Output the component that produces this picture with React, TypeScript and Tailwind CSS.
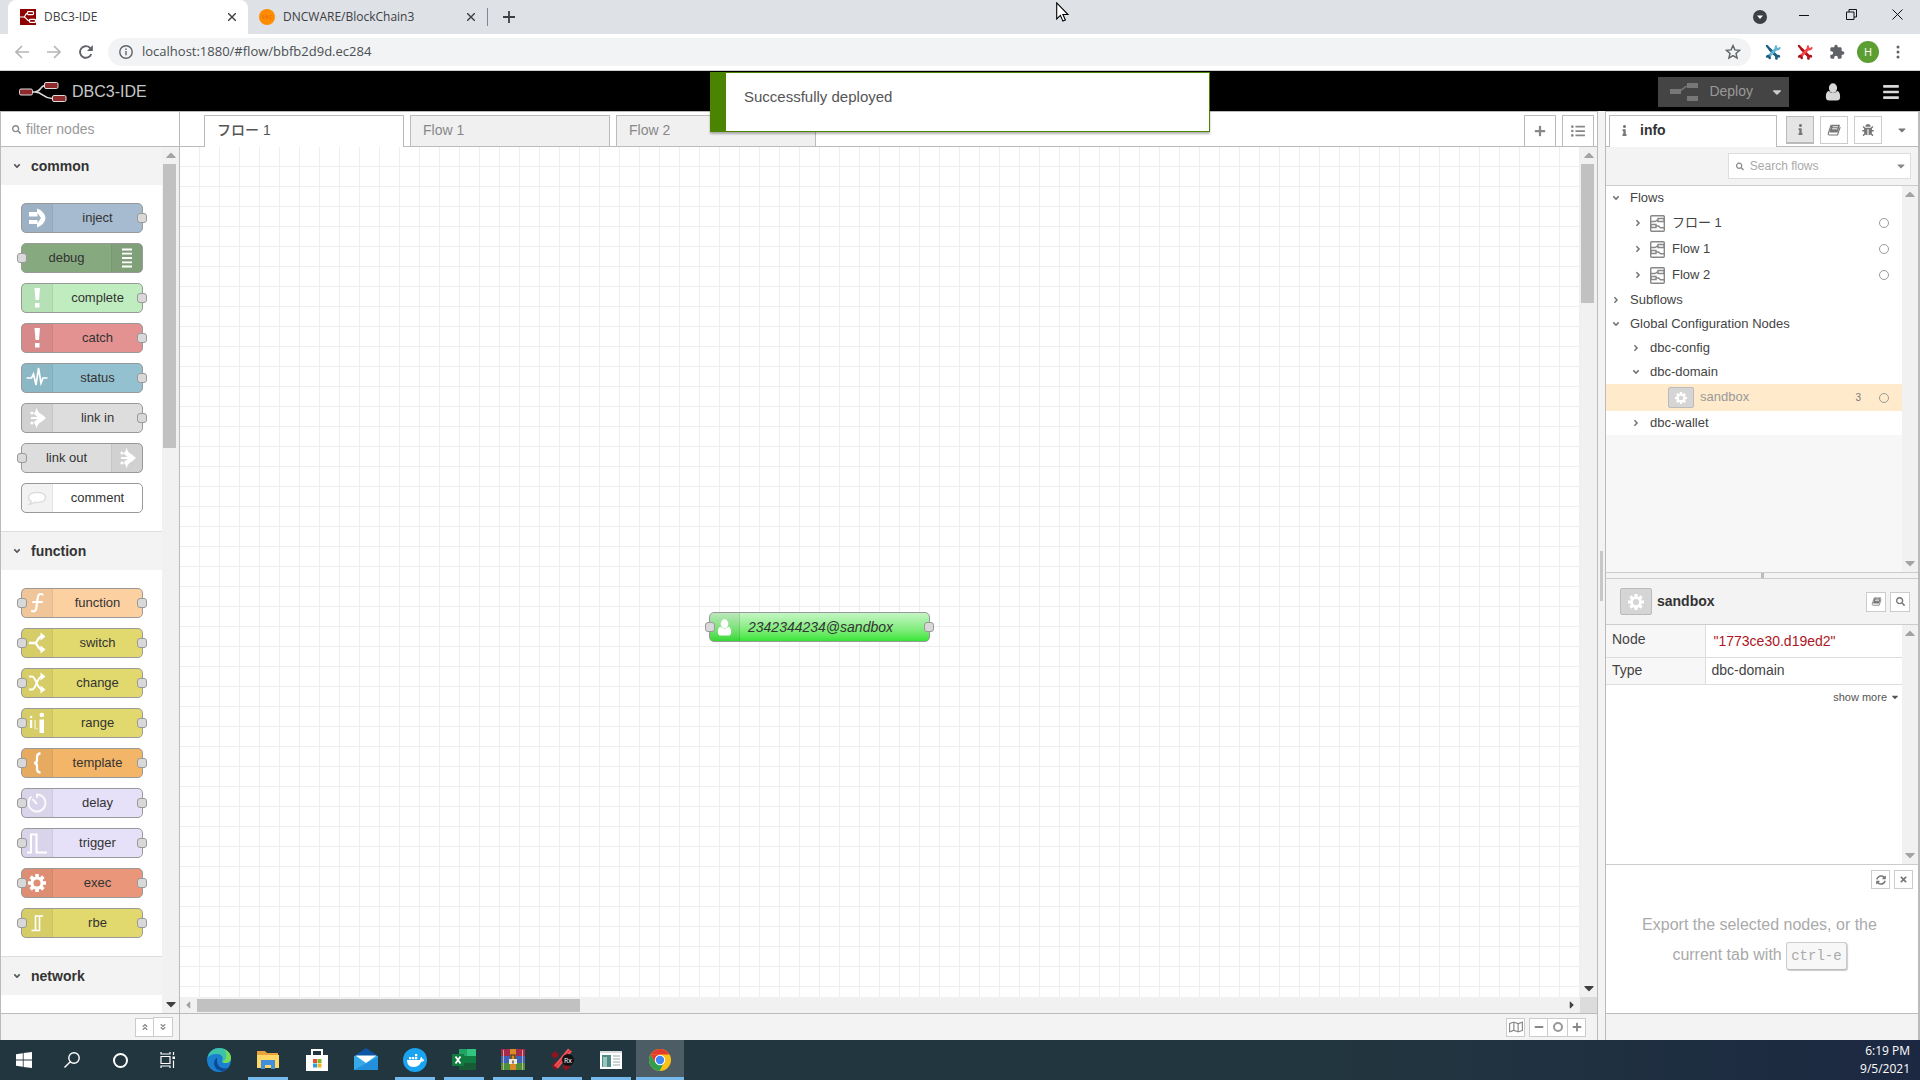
import React from "react";
import {
  FaSearch,
  FaPlus,
  FaMinus,
  FaListUl,
  FaInfo,
  FaBug,
  FaCaretDown,
  FaCaretUp,
  FaCaretLeft,
  FaCaretRight,
  FaTimes,
  FaSyncAlt,
  FaAngleDown,
  FaAngleRight,
  FaAngleDoubleUp,
  FaAngleDoubleDown,
  FaRegMap,
  FaBars,
} from "react-icons/fa";
import { MdExtension } from "react-icons/md";

const ui = "font-['Open_Sans','Noto_Sans_CJK_JP',sans-serif]";

/* ---------- shared pieces ---------- */

function Bust({ className }: { className: string }) {
  return (
    <svg viewBox="0 0 18 20" className={className} fill="currentColor" aria-hidden="true">
      <ellipse cx="9" cy="5.6" rx="4.6" ry="5.4" />
      <path d="M4.4 9C1.4 9.6 1 13 1 15.6 1 18.4 2.4 19.6 4.6 19.6h8.8c2.2 0 3.6-1.2 3.6-4 0-2.6-.4-6-3.4-6.6-1.2 1.4-2.8 2.2-4.6 2.2S5.6 10.400 4.400 9z" />
    </svg>
  );
}

function Cog({ className }: { className: string }) {
  return (
    <svg viewBox="0 0 20 20" className={className} aria-hidden="true">
      <circle cx="10" cy="10" r="5.600" fill="none" stroke="currentColor" strokeWidth="3.400" />
      <path
        d="M10 0v4M10 16v4M0 10h4M16 10h4M2.930 2.930l2.830 2.830M14.240 14.240l2.830 2.830M2.930 17.070l2.830-2.830M14.240 5.760l2.830-2.830"
        stroke="currentColor"
        strokeWidth="4"
      />
    </svg>
  );
}

function Book({ className }: { className: string }) {
  return (
    <svg viewBox="0 0 16 14" className={className} aria-hidden="true">
      <path d="M5 .8h10L12.200 10H2.600z" fill="currentColor" />
      <path d="M6.500 3.200h6M5.800 5.600h6" stroke="#fff" strokeWidth="1.100" />
      <path d="M4.600 1L1.400 10.600c-.4 1.400.2 2.200 1.400 2.200h9.400l3-9.300" fill="none" stroke="currentColor" strokeWidth="1.300" />
    </svg>
  );
}

function VBar({ width, thumb, dim }: { width: string; thumb?: string; dim?: boolean }) {
  return (
    <div className={`flex shrink-0 flex-col items-center bg-[#f1f1f1] ${width}`}>
      <FaCaretUp className="h-4 w-3 shrink-0 text-[#a3a3a3]" />
      <div className="min-h-0 w-full flex-1 px-px pt-px">{thumb && <div className={`w-[13px] bg-[#c1c1c1] ${thumb}`} />}</div>
      <FaCaretDown className={dim ? "mb-px h-4 w-3 shrink-0 text-[#a3a3a3]" : "mb-px h-4 w-3 shrink-0 text-[#404040]"} />
    </div>
  );
}

/* ---------- browser chrome ---------- */

function NodeRedFavicon() {
  return (
    <svg viewBox="0 0 16 16" className="size-4" aria-hidden="true">
      <rect width="16" height="16" fill="#8f0000" />
      <g fill="none" stroke="#fff" strokeWidth="1.200">
        <rect x="7.500" y="2.600" width="6" height="3" rx="0.800" />
        <rect x="9.500" y="10.400" width="6" height="3" rx="0.800" />
        <path d="M0 8h3.500c2.500 0 1.500-3.900 4-3.900M3.500 8c3 0 3 3.900 6 3.900" />
      </g>
    </svg>
  );
}

function TabStrip() {
  return (
    <div className={`flex h-[34px] items-stretch bg-[#dee1e6] text-[12px] text-[#3c4043] ${ui}`}>
      <div className="ml-2 flex w-60 items-center rounded-t-lg bg-white pr-2 pl-3">
        <NodeRedFavicon />
        <span className="ml-2 flex-1">DBC3-IDE</span>
        <button aria-label="Close DBC3-IDE" className="p-1">
          <svg viewBox="0 0 8 8" className="size-2" stroke="#3c4043" strokeWidth="1.400"><path d="M0 0l8 8M8 0L0 8" /></svg>
        </button>
      </div>
      <div className="flex w-[239px] items-center pr-2 pl-[11px]">
        <svg viewBox="0 0 16 16" className="size-4" aria-hidden="true">
          <circle cx="8" cy="8" r="8" fill="#ff8c00" />
          <path d="M3.500 6.500v3h1l.8-1.500-.8-1.500zM7 9.500v-3l1.800 3v-3M12.500 6.500h-1.500v3h1.500" fill="none" stroke="#e06d00" strokeWidth=".7" />
        </svg>
        <span className="ml-2 flex-1">DNCWARE/BlockChain3</span>
        <button aria-label="Close DNCWARE" className="p-1">
          <svg viewBox="0 0 8 8" className="size-2" stroke="#3c4043" strokeWidth="1.400"><path d="M0 0l8 8M8 0L0 8" /></svg>
        </button>
      </div>
      <div className="my-2 w-px bg-[#80868b]" />
      <button aria-label="New tab" className="ml-[15px] flex items-center">
        <svg viewBox="0 0 12 12" className="size-3" stroke="#3c4043" strokeWidth="1.800"><path d="M6 0v12M0 6h12" /></svg>
      </button>
      <div className="flex-1" />
      <button aria-label="Search tabs" className="flex w-10 items-center justify-center">
        <svg viewBox="0 0 14 14" className="size-3.5"><circle cx="7" cy="7" r="7" fill="#3c4043" /><path d="M4 5.500h6L7 9z" fill="#fff" /></svg>
      </button>
      <button aria-label="Minimise" className="flex w-12 items-center justify-center">
        <svg viewBox="0 0 10 10" className="mb-1 size-2.5" stroke="#111"><path d="M0 5.500h10" /></svg>
      </button>
      <button aria-label="Restore" className="flex w-[46px] items-center justify-center">
        <svg viewBox="0 0 11 11" className="mb-1.5 size-[11px]" fill="none" stroke="#111"><path d="M.5 3h7.500v7.500H.5zM3 3V.5h7.500V8H8" /></svg>
      </button>
      <button aria-label="Close window" className="flex w-[46px] items-center justify-center">
        <svg viewBox="0 0 11 11" className="mb-1.5 size-[11px]" stroke="#111"><path d="M.5.5l10 10M10.500.5l-10 10" /></svg>
      </button>
    </div>
  );
}

function Wrenches({ dark, light }: { dark: string; light: string }) {
  return (
    <svg viewBox="0 0 16 16" className="size-4" fill="none" strokeLinecap="round" aria-hidden="true">
      <path d="M5 5.500l6 6" stroke={dark} strokeWidth="3" />
      <path d="M11.500 4.500L4 12" stroke={light} strokeWidth="3" />
      <path d="M2 2l3 3.500" stroke={dark} strokeWidth="2.400" />
      <path d="M11 2.200c-.8 1.800 0 3.200 1.400 3.200 1 0 1.800-.6 2.200-1.400" stroke={light} strokeWidth="2" />
      <path d="M2.200 12.500c1-.8 2.500 0 2.500 1.500M11.500 14.500c-.6-1.400.6-2.800 2.400-2.200" stroke={dark} strokeWidth="2.600" />
    </svg>
  );
}

function AddressBar() {
  return (
    <div className={`flex h-[37px] items-center border-b border-[#d0d0d0] bg-white text-[13px] text-[#5f6368] ${ui}`}>
      <div className="flex w-[108px] items-center gap-[18px] pl-[15px]">
        <button aria-label="Back">
          <svg viewBox="0 0 14 14" className="size-3.5" fill="none" stroke="#b4b6b9" strokeWidth="1.600"><path d="M14 7H1M7 1L1 7l6 6" /></svg>
        </button>
        <button aria-label="Forward">
          <svg viewBox="0 0 14 14" className="size-3.5" fill="none" stroke="#b4b6b9" strokeWidth="1.600"><path d="M0 7h13M7 1l6 6-6 6" /></svg>
        </button>
        <button aria-label="Reload">
          <svg viewBox="0 0 14 14" className="size-3.5" fill="none" stroke="#5f6368" strokeWidth="1.900"><path d="M12.300 9A5.800 5.800 0 1 1 11 2.900l1.500 1.600" /><path d="M13.800 0v6H8z" fill="#5f6368" stroke="none" /></svg>
        </button>
      </div>
      <div className="flex h-7 flex-1 items-center rounded-full bg-[#f1f3f4] pr-2.5 pl-[11px]">
        <svg viewBox="0 0 14 14" className="size-3.5 shrink-0" fill="none" stroke="#5f6368" strokeWidth="1.400"><circle cx="7" cy="7" r="6.200" /><path d="M7 6v4.200M7 3.500v1.500" /></svg>
        <input aria-label="Address" readOnly className="ml-[9px] w-full bg-transparent text-[#4b4f53] outline-none" defaultValue="localhost:1880/#flow/bbfb2d9d.ec284" />
        <button aria-label="Bookmark">
          <svg viewBox="0 0 16 16" className="size-4" fill="none" stroke="#5f6368" strokeWidth="1.400"><path d="M8 1.500l1.900 4.400 4.700.4-3.600 3.100 1.100 4.700L8 11.600l-4.100 2.500L5 9.400 1.400 6.300l4.700-.4z" /></svg>
        </button>
      </div>
      <div className="flex items-center gap-4 pr-[15px] pl-[14px]">
        <button aria-label="Blue tools"><Wrenches dark="#1f5f80" light="#5fb4cf" /></button>
        <button aria-label="Red tools"><Wrenches dark="#b01318" light="#f2454a" /></button>
        <button aria-label="Extensions"><MdExtension className="size-4 text-[#5f6368]" /></button>
        <button aria-label="Profile" className="-mx-1 flex size-[22px] items-center justify-center rounded-full bg-[#5c9e31] text-[11px] text-white">H</button>
        <button aria-label="Menu">
          <svg viewBox="0 0 14 14" className="size-3.5" fill="#5f6368"><circle cx="7" cy="2" r="1.500" /><circle cx="7" cy="7" r="1.500" /><circle cx="7" cy="12" r="1.500" /></svg>
        </button>
      </div>
    </div>
  );
}

/* ---------- editor header ---------- */

function EditorHeader() {
  return (
    <header className="flex h-10 items-center bg-black pt-px text-[#c7c7c7]">
      <svg viewBox="0 0 48 22" className="ml-[19px] h-[22px] w-12" aria-hidden="true">
        <path d="M13 11h3c6 0 5-6.500 10-6.500M16 11c8 0 8 6.500 17 6.500" fill="none" stroke="#ddd" strokeWidth="1.500" />
        <g fill="#8f2a2c" stroke="#ddd">
          <rect x=".5" y="8" width="13" height="6" rx="1.500" />
          <rect x="25.500" y="1.500" width="13.500" height="6" rx="1.500" />
          <rect x="33.500" y="14.500" width="13.500" height="6" rx="1.500" />
        </g>
      </svg>
      <span className="ml-[5px] flex-1 text-[16px]">DBC3-IDE</span>
      <div className="flex h-[30px] items-center bg-[#444] text-[14px] text-[#999]">
        <button className="flex h-full items-center px-3">
          <svg viewBox="0 0 28 20" className="mr-[11px] h-5 w-7" aria-hidden="true">
            <path d="M8 9c6 0 5-5 10-5" fill="none" stroke="#777" strokeWidth="1.500" />
            <g fill="#777"><rect y="7" width="11" height="5" /><rect x="17" y="1" width="11" height="5" /><rect x="17" y="14" width="11" height="5" /></g>
          </svg>
          Deploy
        </button>
        <button aria-label="Deploy options" className="flex h-full w-6 items-center justify-center text-[#ccc]">
          <FaCaretDown className="size-3.5" />
        </button>
      </div>
      <button aria-label="User" className="ml-9 text-[#d8d8d8]"><Bust className="h-[18px] w-4" /></button>
      <button aria-label="Main menu" className="mr-5 ml-[41px] text-[#d8d8d8]"><FaBars className="size-[18px]" /></button>
    </header>
  );
}

/* ---------- palette ---------- */

const glyphs: Record<string, React.ReactNode> = {
  inject: <path d="M4 6h8V2.500c4.500 1.500 8 5 8.500 9.500-.5 4.500-4 8-8.500 9.500V18H4v-4h8.500v3l3.500-5-3.500-5v3.500H4z" fill="#fff" />,
  debug: <path d="M7 3.500h10M7 7.700h10M7 12h10M7 16.300h10M7 20.500h10" stroke="#fff" strokeWidth="1.800" />,
  bang: <path d="M9.500 2h5.500l-1 12h-3.500zM10 17h4.500v4.500H10z" fill="#fff" />,
  status: <path d="M1.500 12h5l2-4 2.500 11L13.500 2l2.500 15 2-5h4.500" fill="none" stroke="#fff" strokeWidth="1.700" />,
  link: <g fill="#fff"><path d="M11.500 1.500c1 4 3 6 5.500 7l4 3.500-4 3.500c-2.500 1-4.500 3-5.500 7-.5-2.500-1-4.500-3-6l4-3.500H6v-2h6.500l-4-3.500c2-1.500 2.500-3.500 3-6z" /><circle cx="7" cy="7" r="1.600" /><circle cx="7" cy="17" r="1.600" /></g>,
  comment: <path d="M12 6.500c5 0 8.500 2 8.500 5s-3.500 5-8.500 5c-1 0-1.500 0-2.500-.2-1.500 1.500-3 2-5 2 1-.7 1.800-1.700 1.800-3-2-1-2.800-2.300-2.800-3.800 0-3 3.500-5 8.500-5z" fill="#fff" stroke="#ddd" strokeWidth="1.500" />,
  function: <path d="M17.500 3.500c-3.500-1.500-4.500.5-5 4.500l-1 8c-.5 4-2 5-4.500 4M8 11h9" fill="none" stroke="#fff" strokeWidth="2.200" strokeLinecap="round" />,
  switch: <g fill="none" stroke="#fff" strokeWidth="2.300"><path d="M4 12h6c2.500 0 2.500-6.500 7-6.500M10 12c2.500 0 2.500 6.500 7 6.500" /><path d="M15.500 1.500l5 4-5 4zM15.500 14.500l5 4-5 4z" fill="#fff" stroke="none" /></g>,
  change: <g fill="none" stroke="#fff" strokeWidth="2"><path d="M4 5.500h3c4 0 5 13 10 13M4 18.500h3c4 0 5-13 10-13" /><path d="M15.500 1.500l5 4-5 4zM15.500 14.500l5 4-5 4z" fill="#fff" stroke="none" /></g>,
  range: <g fill="#fff"><path d="M5 9h2.200v8H5zM14.500 8.500H19v13.500h-4.500z" /><circle cx="6.100" cy="6" r="1.300" /><circle cx="16.800" cy="4" r="2.300" /><path d="M9.500 9h1.200v9H9.500zM11.500 17h1v1.500h-1z" opacity=".8" /></g>,
  template: <path d="M15.500 2.500c-3 0-3.500 1.500-3.500 3.500v3c0 1.500-1 3-3 3 2 0 3 1.500 3 3v3c0 2 .5 3.500 3.500 3.500" fill="none" stroke="#fff" strokeWidth="2.300" />,
  delay: <path d="M6.500 5.500A8.500 8.500 0 1 0 12 3.500v3.200M12 13L7.500 8" fill="none" stroke="#fff" strokeWidth="2" opacity=".85" />,
  trigger: <path d="M2 21.500h4V3.500h5.500v18H22" fill="none" stroke="#fff" strokeWidth="2" />,
  rbe: <path d="M6.500 19.500h4V5h7.500M10.500 19.500h4V5" fill="none" stroke="#fff" strokeWidth="1.600" />,
};

type PNode = { name: string; glyph: string; color: string; left?: boolean; right?: boolean; iconRight?: boolean };

const common: PNode[] = [
  { name: "inject", glyph: "inject", color: "bg-[#a6bbcf]", right: true },
  { name: "debug", glyph: "debug", color: "bg-[#87a980]", left: true, iconRight: true },
  { name: "complete", glyph: "bang", color: "bg-[#c0edc0]", right: true },
  { name: "catch", glyph: "bang", color: "bg-[#e49191]", right: true },
  { name: "status", glyph: "status", color: "bg-[#94c1d0]", right: true },
  { name: "link in", glyph: "link", color: "bg-[#dddddd]", right: true },
  { name: "link out", glyph: "link", color: "bg-[#dddddd]", left: true, iconRight: true },
  { name: "comment", glyph: "comment", color: "bg-white" },
];

const functions: PNode[] = [
  { name: "function", glyph: "function", color: "bg-[#fdd0a2]", left: true, right: true },
  { name: "switch", glyph: "switch", color: "bg-[#e2d96e]", left: true, right: true },
  { name: "change", glyph: "change", color: "bg-[#e2d96e]", left: true, right: true },
  { name: "range", glyph: "range", color: "bg-[#e2d96e]", left: true, right: true },
  { name: "template", glyph: "template", color: "bg-[#f3b567]", left: true, right: true },
  { name: "delay", glyph: "delay", color: "bg-[#e6e0f8]", left: true, right: true },
  { name: "trigger", glyph: "trigger", color: "bg-[#e6e0f8]", left: true, right: true },
  { name: "exec", glyph: "exec", color: "bg-[#e9967a]", left: true, right: true },
  { name: "rbe", glyph: "rbe", color: "bg-[#e2d96e]", left: true, right: true },
];

function Port({ side }: { side: "left" | "right" }) {
  return (
    <span
      className={`absolute top-[9px] size-[10px] rounded-[3px] border border-[#999] bg-[#d9d9d9] ${side === "left" ? "-left-[5px]" : "-right-[5px]"}`}
    />
  );
}

function PaletteNode({ node }: { node: PNode }) {
  return (
    <div
      className={`relative flex h-[30px] w-[122px] items-stretch rounded-[5px] border border-[#999] text-[13px] text-[#333] ${node.color} ${node.iconRight ? "flex-row-reverse" : ""}`}
    >
      <div className={`flex w-[31px] items-center justify-center bg-black/5 ${node.iconRight ? "border-l border-black/5" : "border-r border-black/5"}`}>
        {node.glyph === "exec" ? (
          <Cog className="size-[18px] text-white" />
        ) : (
          <svg viewBox="0 0 24 24" className="size-6" aria-hidden="true">{glyphs[node.glyph]}</svg>
        )}
      </div>
      <span className="flex flex-1 items-center justify-center pb-px">{node.name}</span>
      {node.left && <Port side="left" />}
      {node.right && <Port side="right" />}
    </div>
  );
}

function CategoryTitle({ children }: { children: string }) {
  return (
    <button className="flex h-[38px] w-full items-center bg-[#f3f3f3] pl-[11px] text-[14px] font-bold text-[#333]">
      <FaAngleDown className="mr-[9px] size-2.5 text-[#555]" />
      {children}
    </button>
  );
}

function Palette() {
  return (
    <aside className="flex w-[180px] shrink-0 flex-col border-x border-[#bbb] bg-[#f3f3f3]">
      <label className="flex h-9 shrink-0 items-center border-y border-[#bbb] bg-white pt-px pl-[11px]">
        <FaSearch className="size-[9px] text-[#888]" />
        <input className="ml-[5px] w-32 text-[14px] outline-none placeholder:text-[#999]" placeholder="filter nodes" aria-label="filter nodes" />
      </label>
      <div className="flex min-h-0 flex-1">
        <div className="min-w-0 flex-1 overflow-hidden bg-white">
          <CategoryTitle>common</CategoryTitle>
          <div className="flex flex-col gap-[10px] border-b border-[#ddd] py-[18px] pl-5">
            {common.map((n) => <PaletteNode key={n.name} node={n} />)}
          </div>
          <CategoryTitle>function</CategoryTitle>
          <div className="flex flex-col gap-[10px] border-b border-[#ddd] py-[18px] pl-5">
            {functions.map((n) => <PaletteNode key={n.name} node={n} />)}
          </div>
          <CategoryTitle>network</CategoryTitle>
        </div>
        <VBar width="w-[17px]" thumb="h-[284px]" />
      </div>
      <div className="flex h-[27px] shrink-0 items-center justify-end border-t border-[#bbb] pr-[6px] text-[#888]">
        <button aria-label="Collapse all" className="flex size-[19px] items-center justify-center border border-[#ccc] bg-white"><FaAngleDoubleUp className="size-2" /></button>
        <button aria-label="Expand all" className="-ml-px flex size-5 items-center justify-center border border-[#ccc] bg-white"><FaAngleDoubleDown className="size-2" /></button>
      </div>
    </aside>
  );
}

/* ---------- workspace ---------- */

function Workspace() {
  return (
    <main className="flex min-w-0 flex-1 flex-col border-r border-[#bbb] bg-white">
      <div className="flex h-9 shrink-0 items-end border-y border-[#bbb] text-[14px] text-[#888]">
        <button className="-mb-px ml-6 h-8 w-[200px] border border-b-0 border-[#bbb] bg-white pb-[3px] pl-3 text-left font-medium text-[#555]">フロー 1</button>
        <button className="ml-[6px] h-[31px] w-[200px] border border-b-0 border-[#bbb] bg-[#f0f0f0] pb-[2px] pl-3 text-left">Flow 1</button>
        <button className="ml-[6px] h-[31px] w-[200px] border border-b-0 border-[#bbb] bg-[#f0f0f0] pb-[2px] pl-3 text-left">Flow 2</button>
        <div className="flex-1" />
        <button aria-label="Add flow" className="flex h-[31px] w-8 items-center justify-center border border-b-0 border-[#bbb]"><FaPlus className="size-3" /></button>
        <button aria-label="List flows" className="mr-[3px] ml-[6px] flex h-[31px] w-8 items-center justify-center border border-b-0 border-[#bbb]"><FaListUl className="size-3.5" /></button>
      </div>
      <div className="flex min-h-0 flex-1">
        <div className="relative min-w-0 flex-1 bg-[linear-gradient(to_right,#eeeeee_1px,transparent_1px),linear-gradient(to_bottom,#eeeeee_1px,transparent_1px)] bg-[size:20px_20px] bg-[position:19px_19px]">
          <div className="absolute top-[465px] left-[529px] flex h-[30px] w-[221px] items-stretch rounded-[5px] border border-[#999] bg-linear-to-b from-[#c4f5c4] to-[#33e533] text-[14px] text-[#333] italic">
            <div className="flex w-[30px] items-center justify-center rounded-l-[4px] border-r border-black/10 bg-black/5 text-white"><Bust className="h-[17px] w-[15px]" /></div>
            <span className="flex items-center pl-2">2342344234@sandbox</span>
            <Port side="left" />
            <Port side="right" />
          </div>
        </div>
        <VBar width="w-[17px]" thumb="h-[139px]" />
      </div>
      <div className="flex h-4 shrink-0 items-center bg-[#f1f1f1]">
        <FaCaretLeft className="h-3 w-4 text-[#a3a3a3]" />
        <div className="ml-px flex-1"><div className="h-[13px] w-[28%] bg-[#c1c1c1]" /></div>
        <FaCaretRight className="h-3 w-4 text-[#404040]" />
        <div className="h-full w-[17px] bg-[#dcdcdc]" />
      </div>
      <div className="flex h-[27px] shrink-0 items-center justify-end border-t border-[#bbb] bg-[#f3f3f3] pr-[11px] text-[#888]">
        <button aria-label="Toggle map" className="mr-1 flex size-[19px] items-center justify-center border border-[#ccc] bg-white"><FaRegMap className="size-3.5" /></button>
        <button aria-label="Zoom out" className="flex size-[19px] items-center justify-center border border-[#ccc] bg-white"><FaMinus className="size-2.5" /></button>
        <button aria-label="Reset zoom" className="-mx-px flex h-[19px] w-[21px] items-center justify-center border border-[#ccc] bg-white"><span className="size-[10px] rounded-full border-2 border-[#999]" /></button>
        <button aria-label="Zoom in" className="flex size-[19px] items-center justify-center border border-[#ccc] bg-white"><FaPlus className="size-2.5" /></button>
      </div>
    </main>
  );
}

/* ---------- sidebar ---------- */

function FlowIcon() {
  return (
    <svg viewBox="0 0 15 17" className="mr-[7px] h-[17px] w-[15px]" fill="none" stroke="#888" strokeWidth="1.400" aria-hidden="true">
      <rect x=".7" y=".7" width="13.600" height="15.600" rx="1" />
      <path d="M1 6.500h3.500c2 0 1.500-1.500 3.500-1.500M8 3.500h6v3H8zM1 9.500h5v3H1zM6 11h2c2 0 1 1.800 3 1.800h3" />
    </svg>
  );
}

function Row({ height, indent, open, children }: { height: string; indent: string; open?: boolean; children: React.ReactNode }) {
  return (
    <li className={`flex items-center bg-white ${height} ${indent}`}>
      <button className="flex flex-1 items-center text-left">
        {open ? <FaAngleDown className="mr-[9px] size-2.5 text-[#777]" /> : <FaAngleRight className="mr-[9px] size-2.5 text-[#777]" />}
        {children}
      </button>
    </li>
  );
}

function FlowRow({ name }: { name: string }) {
  return (
    <li className="flex h-[26px] items-center bg-white pr-[13px] pl-[27px]">
      <button className="flex flex-1 items-center text-left">
        <FaAngleRight className="mr-[7px] size-2.5 text-[#777]" />
        <FlowIcon />
        {name}
      </button>
      <button aria-label={`Toggle ${name}`} className="size-[10px] rounded-full border border-[#999]" />
    </li>
  );
}

const squareButton = "flex items-center justify-center border border-[#ccc] bg-white text-[#777]";

function Sidebar() {
  return (
    <aside className="flex w-[315px] shrink-0 flex-col border-r-2 border-l border-[#bbb] bg-[#f3f3f3] text-[13px] text-[#444]">
      <div className="flex h-9 shrink-0 items-end border-y border-[#bbb] bg-white">
        <button className="-mb-px ml-[3px] flex h-8 w-[168px] items-center border border-b-0 border-[#bbb] bg-white pb-[2px] pl-[9px] text-[14px] font-bold text-[#333]">
          <FaInfo className="mr-[10px] size-[11px] text-[#777]" />info
        </button>
        <div className="mb-[2px] ml-[9px] flex gap-[6px]">
          <button aria-label="Information" className="flex size-7 items-center justify-center border border-b-2 border-[#bbb] bg-[#e5e5e5] text-[#777]"><FaInfo className="size-[11px]" /></button>
          <button aria-label="Help" className={`size-7 ${squareButton}`}><Book className="h-3 w-3.5" /></button>
          <button aria-label="Debug" className={`size-7 ${squareButton}`}><FaBug className="size-3" /></button>
        </div>
        <button aria-label="More tabs" className="mb-[10px] ml-[14px] text-[#777]"><FaCaretDown className="size-3" /></button>
      </div>
      <div className="flex h-[39px] shrink-0 items-center justify-end border-b border-[#ccc] pr-[7px]">
        <label className="flex h-[26px] w-[183px] items-center border border-[#ddd] bg-white px-[7px] text-[#888]">
          <FaSearch className="size-[9px]" />
          <input className="ml-[6px] w-full text-[12px] outline-none placeholder:text-[#aaa]" placeholder="Search flows" aria-label="Search flows" />
          <FaCaretDown className="-mr-1 size-3 shrink-0" />
        </label>
      </div>
      <div className="flex h-[386px] shrink-0">
        <ul className="flex-1 bg-[#f7f7f7]">
          <Row height="h-6" indent="pl-[5px]" open>Flows</Row>
          <FlowRow name="フロー 1" />
          <FlowRow name="Flow 1" />
          <FlowRow name="Flow 2" />
          <Row height="h-6" indent="pl-[5px]">Subflows</Row>
          <Row height="h-6" indent="pl-[5px]" open>Global Configuration Nodes</Row>
          <Row height="h-6" indent="pl-[25px]">dbc-config</Row>
          <Row height="h-6" indent="pl-[25px]" open>dbc-domain</Row>
          <li className="flex h-[27px] items-center bg-[#ffebcc] pr-[13px] pl-[62px] text-[#999]">
            <span className="mr-[6px] flex h-[21px] w-[26px] items-center justify-center rounded-[2px] border border-[#bbb] bg-[#d5d5d5] text-white"><Cog className="size-3" /></span>
            <span className="flex-1 pb-px">sandbox</span>
            <span className="mr-[18px] text-[10px] text-[#777]">3</span>
            <button aria-label="Toggle sandbox" className="size-[10px] rounded-full border border-[#999]" />
          </li>
          <Row height="h-6" indent="pl-[25px]">dbc-wallet</Row>
        </ul>
        <VBar width="w-4" dim />
      </div>
      <div className="flex h-[7px] shrink-0 items-center justify-center border-y border-[#ccc]"><span className="h-[5px] w-[3px] bg-[#bbb]" /></div>
      <div className="flex h-[46px] shrink-0 items-center border-b border-[#ccc] pr-2 pl-[14px]">
        <span className="mr-[5px] flex h-[27px] w-8 items-center justify-center rounded-[2px] border border-[#bbb] bg-[#d5d5d5] text-white"><Cog className="size-4" /></span>
        <h2 className="flex-1 text-[14px] font-bold text-[#333]">sandbox</h2>
        <button aria-label="Show help" className={`mr-1 size-5 ${squareButton}`}><Book className="h-[9px] w-[11px]" /></button>
        <button aria-label="Find node" className={`size-5 ${squareButton}`}><FaSearch className="size-[9px]" /></button>
      </div>
      <div className="flex min-h-0 flex-1 bg-white">
        <div className="flex-1">
          <table className="w-full text-[14px]">
            <tbody>
              <tr className="h-8 border-b border-[#ddd]">
                <th scope="row" className="w-[99px] border-r border-[#ddd] bg-[#f7f7f7] pb-[2px] pl-[6px] text-left font-normal">Node</th>
                <td className="pt-[2px] pl-[8px] text-[#ad1625]">"1773ce30.d19ed2"</td>
              </tr>
              <tr className="h-[27px] border-b border-[#ddd]">
                <th scope="row" className="border-r border-[#ddd] bg-[#f7f7f7] pl-[6px] text-left font-normal">Type</th>
                <td className="pl-[6px]">dbc-domain</td>
              </tr>
            </tbody>
          </table>
          <button className="mt-1 mr-[2px] ml-auto flex items-center text-[11px] text-[#555]">show more <FaCaretDown className="ml-[3px] size-[10px]" /></button>
        </div>
        <VBar width="w-4" dim />
      </div>
      <div className="h-[149px] shrink-0 border-t border-[#ccc] bg-white pt-[5px] pr-[5px]">
        <div className="flex justify-end gap-1">
          <button aria-label="Next tip" className={`size-[19px] ${squareButton}`}><FaSyncAlt className="size-[10px]" /></button>
          <button aria-label="Close tips" className={`size-[19px] ${squareButton}`}><FaTimes className="size-[9px]" /></button>
        </div>
        <p className="mt-[21px] text-center text-[16px] leading-[30px] text-[#aaa]">
          Export the selected nodes, or the<br />
          current tab with <kbd className="inline-block h-7 rounded-[3px] border border-[#ccc] border-b-[#bbb] bg-[#f7f7f7] px-1 font-['Liberation_Mono',monospace] text-[14px] leading-[26px] shadow-[1px_1px_1px_#ccc]">ctrl-e</kbd>
        </p>
      </div>
      <div className="h-[27px] shrink-0 border-t border-[#bbb]" />
    </aside>
  );
}

/* ---------- taskbar ---------- */

const apps: { name: string; open?: boolean; active?: boolean; art: React.ReactNode }[] = [
  { name: "Edge", art: (
    <g>
      <circle cx="12" cy="12" r="12" fill="#1b7fd0" />
      <path d="M.5 10C2 3 7 0 12.500 0 19 0 24 4.500 24 10c0 3-2.500 5-5.500 5-2.500 0-3.500-1-3.500-2 0-.8.8-1.200.8-2.800C15.800 8 13.500 6 10 6 5 6 1.500 8 .5 10z" fill="#3cc3a8" />
      <path d="M17 1.200c4.200 1.600 7 5 7 8.800 0 3-2.500 5-5.500 5-1.500 0-2.500-.4-3-1 5-2 5-9 1.500-12.800z" fill="#7ad957" />
      <path d="M10 9.500C8 11 7 13 7 15.500c0 3.800 3.500 7.500 8.500 7.500 3 0 5-1.500 6.500-3.500-6 2.500-12-.5-12-7z" fill="#0c4a94" />
    </g>) },
  { name: "File Explorer", open: true, art: (
    <g><path d="M1 3h8l2 2h11v5H1z" fill="#e8a33d" /><path d="M1 7h22v13H1z" fill="#ffd767" /><path d="M5 12h14v9h-4v-4H9v4H5z" fill="#3f8fdc" /></g>) },
  { name: "Store", art: (
    <g><path d="M1 7h22v16H1z" fill="#fff" /><path d="M7 7V2h10v5" fill="none" stroke="#fff" strokeWidth="2" /><path d="M8 11h4v4H8z" fill="#e8502e" /><path d="M12.500 11h4v4h-4z" fill="#7db928" /><path d="M8 15.500h4v4H8z" fill="#2ba0e5" /><path d="M12.500 15.500h4v4h-4z" fill="#f5b41d" /></g>) },
  { name: "Mail", art: (
    <g><path d="M12 0l12 8H0z" fill="#0d56a6" /><path d="M0 8h24v14H0z" fill="#35a9ea" /><path d="M1.500 7.500h21L12 15z" fill="#fff" /><path d="M0 22L24 9v13z" fill="#1d86d8" opacity=".7" /></g>) },
  { name: "Docker", open: true, art: (
    <g><circle cx="12" cy="12" r="12" fill="#1aa3f0" /><path d="M4 12h13c0-2 1-3 1.500-3 .8.800 1 1.500 1 2.200 1 0 1.500.2 2 .6-.8 1.500-2 2-3.200 2C16.500 17.500 14 19 10.500 19 6 19 4 16 4 12z" fill="#fff" /><path d="M6 9h2.300v2.300H6zM9 9h2.300v2.300H9zM12 9h2.300v2.300H12zM12 6h2.300v2.300H12z" fill="#fff" /></g>) },
  { name: "Excel", open: true, art: (
    <g><path d="M7 1h17v21H7z" fill="#21a366" /><path d="M15 1h9v7h-9z" fill="#33c481" /><path d="M7 8h17v7H7z" fill="#107c41" /><path d="M7 15h17v7H7z" fill="#185c37" /><rect y="6" width="12" height="12" rx="1" fill="#107c41" /><path d="M3.500 8.500l5 7M8.500 8.500l-5 7" stroke="#fff" strokeWidth="1.800" /></g>) },
  { name: "WinRAR", open: true, art: (
    <g><path d="M0 1h24v7H0z" fill="#a52a4c" /><path d="M0 8h24v7H0z" fill="#3e62b8" /><path d="M0 15h24v7H0z" fill="#4f8f3a" /><path d="M2.500 2v20M21.500 2v20" stroke="#d9c6a0" strokeWidth=".8" /><path d="M9 1h6v21H9z" fill="#d98a24" /><path d="M8 11h8v5H8z" fill="#f0ead8" /><path d="M10 11V7h4v4M12 12.500v3" fill="none" stroke="#333" strokeWidth="1.200" /></g>) },
  { name: "Rx", open: true, art: (
    <g><path d="M3 5l4 4M8 15l-4 5M15 17l3 4" stroke="#8f151c" strokeWidth="6" /><path d="M20 2L6 19" stroke="#f0545a" strokeWidth="5" /><path d="M20 2L6 19" stroke="#c9262d" strokeWidth="1" /><circle cx="18" cy="12" r="6" fill="#111" /><text x="18" y="14.500" fontSize="7" textAnchor="middle" fill="#fff">Rx</text></g>) },
  { name: "Reader", open: true, art: (
    <g><path d="M1 3h22v18H1z" fill="#fff" /><path d="M3 7h9v12H3z" fill="#4f8d86" /><path d="M4 9h4v10H4z" fill="#9bc4bc" /><path d="M14 8h7M14 11h7M14 14h7M14 17h7" stroke="#9aa" /><path d="M1 3h22v2H1z" fill="#d8dcdf" /></g>) },
  { name: "Chrome", open: true, active: true, art: (
    <g><circle cx="12" cy="12" r="11" fill="#fbc116" /><path d="M2.500 6.500A11 11 0 0 1 21.500 6.500H12z" fill="#e33b2e" /><path d="M2.500 6.500A11 11 0 0 0 11.500 23l4.500-8.500-8.500.5z" fill="#2f9e4f" /><path d="M2.500 6.500L7.500 15 12 6.500z" fill="#e33b2e" /><circle cx="12" cy="12" r="5.200" fill="#fff" /><circle cx="12" cy="12" r="4.200" fill="#4285f4" /></g>) },
];

function Taskbar() {
  return (
    <footer className={`flex h-10 shrink-0 items-stretch bg-linear-to-r from-[#22363f] via-[#22363f] via-70% to-[#1c2842] text-white ${ui}`}>
      <button aria-label="Start" className="flex w-12 items-center justify-center">
        <svg viewBox="0 0 16 16" className="size-4" fill="#fff"><path d="M0 2.200l6.800-1v6.400H0zM7.600 1.100L16 0v7.600H7.600zM0 8.400h6.800v6.400l-6.800-1zM7.600 8.400H16V16l-8.400-1.100z" /></svg>
      </button>
      <button aria-label="Search" className="flex w-12 items-center justify-center">
        <svg viewBox="0 0 16 16" className="size-4" fill="none" stroke="#fff" strokeWidth="1.400"><circle cx="10" cy="6" r="5.200" /><path d="M6.300 9.700L.5 15.500" /></svg>
      </button>
      <button aria-label="Cortana" className="flex w-12 items-center justify-center"><span className="size-[15px] rounded-full border-2 border-white" /></button>
      <button aria-label="Task view" className="mr-[3px] flex w-12 items-center justify-center">
        <svg viewBox="0 0 16 16" className="size-4" fill="none" stroke="#fff" strokeWidth="1.200"><path d="M1 4.500h9v7H1zM1 0v2h9V0M1 16v-2h9v2M13.500 0v3M13.500 8.500V16" /><path d="M12.500 4.500h2.500v2.500h-2.500z" fill="#fff" stroke="none" /></svg>
      </button>
      {apps.map((a) => (
        <button key={a.name} aria-label={a.name} className={`mr-px flex w-12 flex-col items-center ${a.active ? "bg-[#4c5d66]" : ""}`}>
          <span className="flex flex-1 items-center pt-[3px]"><svg viewBox="0 0 24 24" className="size-6">{a.art}</svg></span>
          <span className={`h-[3px] ${a.open ? "bg-[#76b9ed]" : ""} ${a.active ? "w-full" : "w-10"}`} />
        </button>
      ))}
      <div className="flex flex-1 flex-col justify-center pr-[10px] text-right text-[12px] leading-[18px]">
        <time>6:19 PM</time>
        <time>9/5/2021</time>
      </div>
    </footer>
  );
}

/* ---------- page ---------- */

export default function App() {
  return (
    <div className="relative flex h-screen min-h-[1000px] flex-col overflow-hidden bg-[#f3f3f3] font-['Liberation_Sans','Noto_Sans_CJK_JP',sans-serif] leading-normal">
      <TabStrip />
      <AddressBar />
      <EditorHeader />
      <div className="flex min-h-0 flex-1">
        <Palette />
        <Workspace />
        <div className="flex w-[7px] shrink-0 items-center justify-center bg-[#f3f3f3]"><span className="h-[50px] w-[3px] bg-[#c8c8c8]" /></div>
        <Sidebar />
      </div>
      <Taskbar />

      <div role="status" className="absolute top-[72px] left-1/2 flex h-[60px] w-[500px] -translate-x-1/2 border border-l-[16px] border-[#4b8400] bg-white pt-[13px] pl-[18px] text-[15px] text-[#555] shadow-[0_2px_2px_rgba(0,0,0,0.3)]">
        Successfully deployed
      </div>
      <svg viewBox="0 0 13 20" className="absolute top-[2px] left-[55%] h-5 w-[13px]" aria-hidden="true">
        <path d="M.7.9v16l3.700-3.500 2.500 5.700 2.500-1.100-2.500-5.500h5.100z" fill="#fff" stroke="#000" strokeWidth="1.100" />
      </svg>
    </div>
  );
}
